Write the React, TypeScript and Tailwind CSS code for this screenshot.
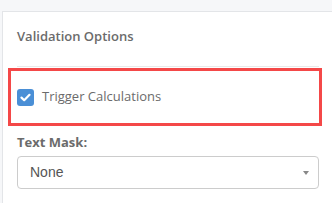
import React from "react";

export default function App() {
  return (
    <div className="w-[332px] h-[203px] overflow-hidden bg-[#f6f7f9] pt-[11px] pl-[2px]" style={{ fontFamily: '"Open Sans", "Liberation Sans", sans-serif' }}>
      <div className="h-[192px] bg-white border-t border-l border-[#e3e5e8] pl-[14px] pr-[13px] pt-[14px]">
        <div className="text-[13px] leading-[20px] font-semibold text-[#6b6b6b]">Validation Options</div>
        <div className="mt-[20px] h-px bg-[#e9e9e9]"></div>
        <div className="ml-[-9px] mr-[-3px] mt-[1px] h-[58px] border-[3px] border-[#f44848] flex items-center pl-[6px]">
          <div className="w-[17px] h-[17px] rounded-[3px] bg-[#4a8fd6] flex items-center justify-center">
            <svg width="11" height="9" viewBox="0 0 11 9">
              <path d="M1.5 4.6 L4.2 7.2 L9.5 1.8" stroke="white" strokeWidth="2.2" fill="none" strokeLinecap="round" strokeLinejoin="round" />
            </svg>
          </div>
          <span className="ml-[8px] text-[13px] text-[#6b6b6b]">Trigger Calculations</span>
        </div>
        <div className="mt-[6px] text-[13px] leading-[20px] font-bold text-[#6b6b6b]">Text Mask:</div>
        <div className="mt-[4px] h-[33px] rounded-[4px] border border-[#cccccc] flex items-center justify-between pl-[12px] pr-[9px]">
          <span className="text-[14px] text-[#555]" style={{ fontFamily: '"Liberation Sans", Arial, sans-serif' }}>None</span>
          <svg width="6" height="4" viewBox="0 0 6 4">
            <path d="M0 0 L6 0 L3 4 Z" fill="#888" />
          </svg>
        </div>
      </div>
    </div>
  );
}
